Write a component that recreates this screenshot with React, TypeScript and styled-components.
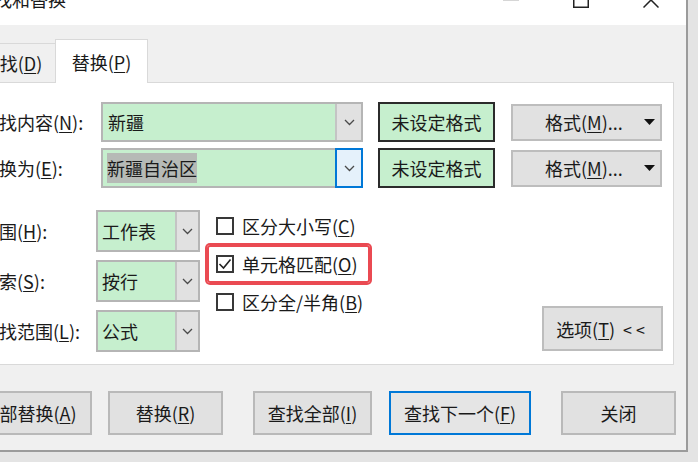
import React from "react";
import styled, { createGlobalStyle, css } from "styled-components";

const GlobalStyle = createGlobalStyle`
  html, body { margin: 0; padding: 0; width: 698px; height: 462px; overflow: hidden; background: #e4e4e4; }
  body { font-family: "Noto Sans CJK SC", "Noto Sans", sans-serif; font-size: 18px; color: #1a1a1a; }
  * { box-sizing: border-box; }
  u { text-decoration-thickness: 1px; text-underline-offset: 2px; }
`;

const Window = styled.div`
  width: 728px;
  height: 452px;
  margin-left: -40px;
  background: #f0f0f0;
  border-right: 2px solid #9b9b9b;
  border-bottom: 2px solid #9b9b9b;
  display: flex;
  flex-direction: column;
  overflow: hidden;
`;

const TitleBar = styled.div`
  height: 25px;
  flex-shrink: 0;
  background: #fff;
  display: flex;
  justify-content: space-between;
  align-items: flex-start;
  overflow: hidden;
`;

const Title = styled.div`
  margin-top: -10px;
  padding-left: 16px;
  line-height: 18px;
  white-space: nowrap;
`;

const Controls = styled.div`
  display: flex;
`;

const CtrlBtn = styled.div`
  width: 70px;
  height: 25px;
  display: flex;
  justify-content: center;
  align-items: flex-start;
  svg { margin-top: -8px; }
`;

const TabStrip = styled.div`
  height: 57px;
  flex-shrink: 0;
  display: flex;
  align-items: flex-end;
  padding-left: 8px;
`;

const Tab = styled.div<{ $active?: boolean }>`
  display: flex;
  align-items: center;
  justify-content: center;
  border: 1px solid #d9d9d9;
  border-bottom: none;
  line-height: 18px;
  white-space: nowrap;
  ${(p) =>
    p.$active
      ? css`
          width: 93px;
          height: 44px;
          background: #fff;
          margin-bottom: -1px;
          margin-left: -1px;
          position: relative;
          z-index: 1;
        `
      : css`
          width: 88px;
          height: 39px;
          background: #f0f0f0;
        `}
`;

const Panel = styled.div`
  margin-left: 10px;
  width: 704px;
  height: 283px;
  flex-shrink: 0;
  background: #fff;
  border: 1px solid #d9d9d9;
  padding: 19px 10px 0 10px;
  display: flex;
  flex-direction: column;
`;

const Row = styled.div<{ $gap?: number }>`
  display: flex;
  align-items: center;
  height: 40px;
  margin-top: ${(p) => p.$gap ?? 0}px;
`;

const Label = styled.div<{ $w: number }>`
  width: ${(p) => p.$w}px;
  flex-shrink: 0;
  white-space: nowrap;
  line-height: 18px;
`;

const Combo = styled.div<{ $w: number; $h: number }>`
  width: ${(p) => p.$w}px;
  height: ${(p) => p.$h}px;
  flex-shrink: 0;
  display: flex;
  border: 2px solid #b5b5b5;
`;

const Field = styled.div<{ $pad: number }>`
  flex: 1;
  background: #c6efce;
  display: flex;
  align-items: center;
  padding-left: ${(p) => p.$pad}px;
  line-height: 18px;
  white-space: nowrap;
`;

const Selected = styled.span`
  background: #b6bab6;
  height: 30px;
  line-height: 30px;
  display: inline-block;
`;

const Drop = styled.div<{ $w: number; $focused?: boolean }>`
  width: ${(p) => p.$w}px;
  flex-shrink: 0;
  display: flex;
  align-items: center;
  justify-content: center;
  ${(p) =>
    p.$focused
      ? css`
          background: #e5f1fb;
          border: 2px solid #0078d7;
          margin: -2px -2px -2px 0;
          width: ${p.$w + 2}px;
        `
      : css`
          background: #e1e1e1;
          border-left: 2px solid #c4c4c4;
        `}
`;

const FormatBox = styled.div`
  width: 117px;
  height: 40px;
  margin-left: 15px;
  flex-shrink: 0;
  background: #c6efce;
  border: 2px solid #2b2b2b;
  display: flex;
  align-items: center;
  justify-content: center;
  line-height: 18px;
  white-space: nowrap;
`;

const FormatBtn = styled.div`
  width: 151px;
  height: 37px;
  margin-left: 16px;
  flex-shrink: 0;
  background: #e1e1e1;
  border: 2px solid #bdbdbd;
  display: flex;
  align-items: center;
  justify-content: space-between;
  padding: 0 5px 0 32px;
  line-height: 18px;
  white-space: nowrap;
`;

const Section = styled.div`
  display: flex;
  margin-top: 19px;
`;

const ComboCol = styled.div`
  display: flex;
  flex-direction: column;
  gap: 8px;
  padding-top: 3px;
`;

const SmallRow = styled.div`
  display: flex;
  align-items: center;
  height: 42px;
`;

const CheckCol = styled.div`
  display: flex;
  flex-direction: column;
  margin-left: 7px;
`;

const CheckRow = styled.div<{ $highlight?: boolean }>`
  width: 163px;
  height: 38px;
  display: flex;
  align-items: center;
  gap: 8px;
  padding-left: 9px;
  border-radius: 3px;
  line-height: 18px;
  white-space: nowrap;
  ${(p) =>
    p.$highlight &&
    css`
      box-shadow: 0 0 0 2px #ea4a52, inset 0 0 0 2px #ea4a52;
    `}
`;

const CheckBox = styled.div`
  width: 18px;
  height: 18px;
  flex-shrink: 0;
  border: 2px solid #383838;
  background: #fff;
  display: flex;
  align-items: center;
  justify-content: center;
`;

const OptionBtn = styled.div`
  margin-left: auto;
  align-self: flex-end;
  margin-bottom: 1px;
  width: 121px;
  height: 45px;
  background: #e1e1e1;
  border: 2px solid #bdbdbd;
  display: flex;
  align-items: center;
  justify-content: center;
  line-height: 18px;
  white-space: nowrap;
`;

const Angles = styled.span`
  margin-left: 8px;
  letter-spacing: 4px;
  font-size: 16px;
`;

const ButtonBar = styled.div`
  display: flex;
  height: 44px;
  margin-top: 26px;
  padding-left: 6px;
  flex-shrink: 0;
`;

const DlgBtn = styled.div<{ $w: number; $ml?: number; $primary?: boolean }>`
  width: ${(p) => p.$w}px;
  margin-left: ${(p) => p.$ml ?? 0}px;
  height: 44px;
  flex-shrink: 0;
  display: flex;
  align-items: center;
  justify-content: center;
  line-height: 18px;
  white-space: nowrap;
  background: ${(p) => (p.$primary ? "#e5e5e5" : "#e1e1e1")};
  border: 2px solid ${(p) => (p.$primary ? "#0078d7" : "#b9b9b9")};
`;

const Chevron = () => (
  <svg width="11" height="7" viewBox="0 0 11 7">
    <polyline points="1,1 5.5,5.5 10,1" fill="none" stroke="#4a4a4a" strokeWidth="1.3" />
  </svg>
);

const Caret = () => (
  <svg width="11" height="7" viewBox="0 0 11 7">
    <polygon points="0,0 11,0 5.5,6" fill="#111" />
  </svg>
);

const Check = () => (
  <svg width="14" height="14" viewBox="0 0 14 14">
    <polyline points="1.5,7 5.5,11 12.5,2.5" fill="none" stroke="#222" strokeWidth="1.6" />
  </svg>
);

export default function App() {
  return (
    <>
      <GlobalStyle />
      <Window>
        <TitleBar>
          <Title>查找和替换</Title>
          <Controls>
            <CtrlBtn>
              <svg width="16" height="16" viewBox="0 0 16 16">
                <line x1="0" y1="8" x2="16" y2="8" stroke="#c8c8c8" strokeWidth="1.5" />
              </svg>
            </CtrlBtn>
            <CtrlBtn>
              <svg width="16" height="16" viewBox="0 0 16 16">
                <rect x="0.75" y="0.75" width="14.5" height="14.5" fill="none" stroke="#222" strokeWidth="1.5" />
              </svg>
            </CtrlBtn>
            <CtrlBtn>
              <svg width="16" height="16" viewBox="0 0 16 16">
                <path d="M0.5 0.5 L15.5 15.5 M15.5 0.5 L0.5 15.5" stroke="#222" strokeWidth="1.5" />
              </svg>
            </CtrlBtn>
          </Controls>
        </TitleBar>

        <TabStrip>
          <Tab>
            查找(<u>D</u>)
          </Tab>
          <Tab $active>
            替换(<u>P</u>)
          </Tab>
        </TabStrip>

        <Panel>
          <Row>
            <Label $w={120}>
              查找内容(<u>N</u>):
            </Label>
            <Combo $w={262} $h={40}>
              <Field $pad={5}>新疆</Field>
              <Drop $w={26}>
                <Chevron />
              </Drop>
            </Combo>
            <FormatBox>未设定格式</FormatBox>
            <FormatBtn>
              <span>
                格式(<u>M</u>)...
              </span>
              <Caret />
            </FormatBtn>
          </Row>
          <Row $gap={6}>
            <Label $w={120}>
              替换为(<u>E</u>):
            </Label>
            <Combo $w={262} $h={40}>
              <Field $pad={4}>
                <Selected>新疆自治区</Selected>
              </Field>
              <Drop $w={26} $focused>
                <Chevron />
              </Drop>
            </Combo>
            <FormatBox>未设定格式</FormatBox>
            <FormatBtn>
              <span>
                格式(<u>M</u>)...
              </span>
              <Caret />
            </FormatBtn>
          </Row>

          <Section>
            <ComboCol>
              <SmallRow>
                <Label $w={115}>
                  范围(<u>H</u>):
                </Label>
                <Combo $w={104} $h={42}>
                  <Field $pad={4}>工作表</Field>
                  <Drop $w={23}>
                    <Chevron />
                  </Drop>
                </Combo>
              </SmallRow>
              <SmallRow>
                <Label $w={115}>
                  搜索(<u>S</u>):
                </Label>
                <Combo $w={104} $h={42}>
                  <Field $pad={4}>按行</Field>
                  <Drop $w={23}>
                    <Chevron />
                  </Drop>
                </Combo>
              </SmallRow>
              <SmallRow>
                <Label $w={115}>
                  查找范围(<u>L</u>):
                </Label>
                <Combo $w={104} $h={42}>
                  <Field $pad={4}>公式</Field>
                  <Drop $w={23}>
                    <Chevron />
                  </Drop>
                </Combo>
              </SmallRow>
            </ComboCol>

            <CheckCol>
              <CheckRow>
                <CheckBox />
                <span>
                  区分大小写(<u>C</u>)
                </span>
              </CheckRow>
              <CheckRow $highlight>
                <CheckBox>
                  <Check />
                </CheckBox>
                <span>
                  单元格匹配(<u>O</u>)
                </span>
              </CheckRow>
              <CheckRow>
                <CheckBox />
                <span>
                  区分全/半角(<u>B</u>)
                </span>
              </CheckRow>
            </CheckCol>

            <OptionBtn>
              选项(<u>T</u>)<Angles>&lt;&lt;</Angles>
            </OptionBtn>
          </Section>
        </Panel>

        <ButtonBar>
          <DlgBtn $w={126}>
            全部替换(<u>A</u>)
          </DlgBtn>
          <DlgBtn $w={115} $ml={16}>
            替换(<u>R</u>)
          </DlgBtn>
          <DlgBtn $w={119} $ml={30}>
            查找全部(<u>I</u>)
          </DlgBtn>
          <DlgBtn $w={142} $ml={17} $primary>
            查找下一个(<u>F</u>)
          </DlgBtn>
          <DlgBtn $w={115} $ml={30}>
            关闭
          </DlgBtn>
        </ButtonBar>
      </Window>
    </>
  );
}
